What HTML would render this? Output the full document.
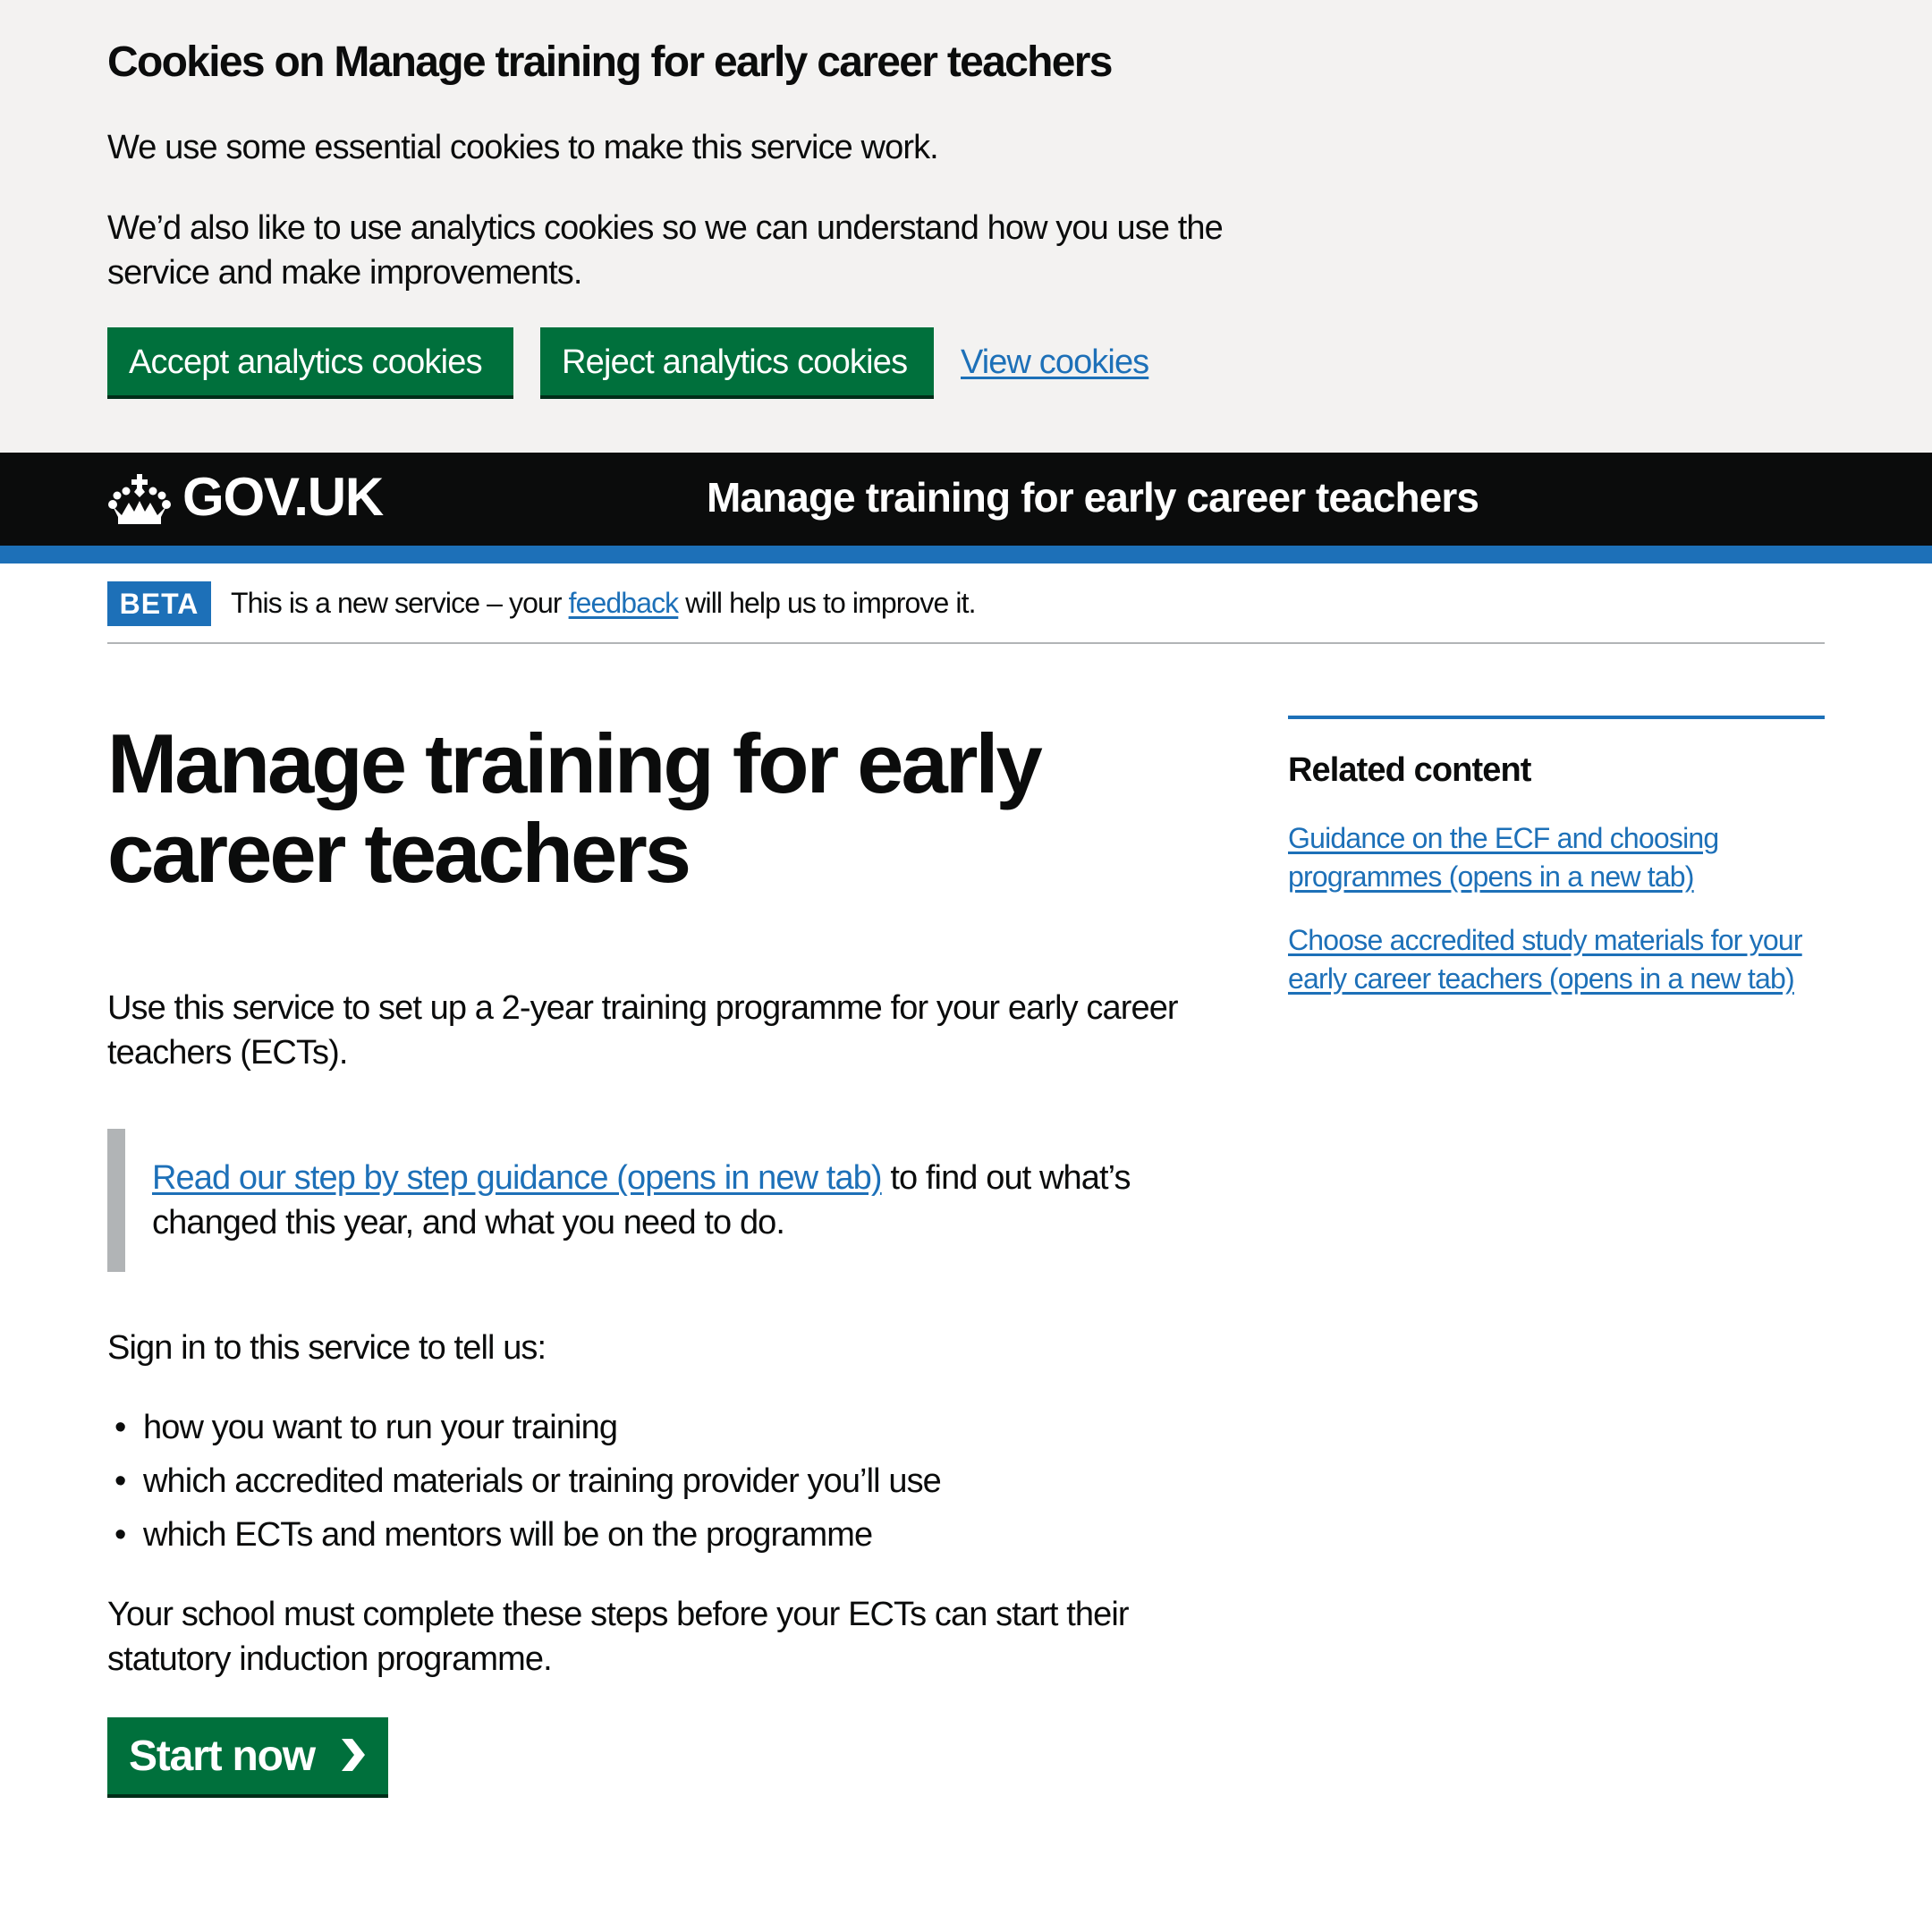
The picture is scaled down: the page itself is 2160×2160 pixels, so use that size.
<!DOCTYPE html>
<html><head><meta charset="utf-8"><style>
*{margin:0;padding:0;box-sizing:border-box}
html,body{width:2160px;height:2160px;overflow:hidden;background:#fff}
#z{zoom:2;width:1080px;height:1080px;position:relative;font-family:"Liberation Sans",Arial,sans-serif;color:#0b0c0c}
.a{position:absolute;white-space:nowrap}
.b{font-size:19px;line-height:25px;letter-spacing:-0.45px}
a{color:#1d70b8;text-decoration:underline;text-underline-offset:2px}
.btn{position:absolute;background:#00703c;color:#fff;box-shadow:0 2px 0 #002d18;font-size:19px;letter-spacing:-0.4px;line-height:19px;padding:10px 12px 8px}
</style></head><body><div id="z">
<div class="a" style="left:0;top:0;width:1080px;height:253px;background:#f3f2f1"></div>
<div class="a" style="left:60px;top:20px;font-size:24px;line-height:30px;font-weight:bold;letter-spacing:-0.85px">Cookies on Manage training for early career teachers</div>
<div class="a b" style="left:60px;top:70px">We use some essential cookies to make this service work.</div>
<div class="a b" style="left:60px;top:115px">We’d also like to use analytics cookies so we can understand how you use the<br>service and make improvements.</div>
<div class="btn" style="left:60px;top:183px;width:227px;height:38px">Accept analytics cookies</div>
<div class="btn" style="left:302px;top:183px;width:220px;height:38px">Reject analytics cookies</div>
<a class="a b" style="left:537px;top:190px">View cookies</a>

<div class="a" style="left:0;top:253px;width:1080px;height:52px;background:#0b0c0c"></div>
<div class="a" style="left:0;top:305px;width:1080px;height:10px;background:#1d70b8"></div>
<svg class="a" style="left:60px;top:264px" width="36" height="30" viewBox="0 0 72 60" fill="#fff">
<circle cx="6" cy="36" r="5"/><circle cx="11" cy="26" r="4.5"/><circle cx="21" cy="21" r="4.5"/><circle cx="51" cy="21" r="4.5"/><circle cx="61" cy="26" r="4.5"/><circle cx="66" cy="36" r="5"/>
<path d="M33 2h6v6h6v6h-6v4l3 4-6 6-6-6 3-4v-4h-6V8h6z"/>
<path d="M6 38l10 10 8-14 6 10 6-12 6 12 6-10 8 14 10-10-6 12H12z"/>
<rect x="12" y="50" width="48" height="8"/>
</svg>
<div class="a" style="left:102px;top:260px;color:#fff;font-size:30px;line-height:36px;font-weight:bold;letter-spacing:-0.6px">GOV.UK</div>
<div class="a" style="left:395px;top:263px;color:#fff;font-size:23px;line-height:30px;font-weight:bold;letter-spacing:-0.45px">Manage training for early career teachers</div>

<div class="a" style="left:60px;top:325px;width:58px;height:25px;background:#1d70b8;color:#fff;font-weight:bold;font-size:16px;line-height:25px;text-align:center;letter-spacing:0.5px">BETA</div>
<div class="a" style="left:129px;top:327px;font-size:16px;line-height:20px;letter-spacing:-0.45px">This is a new service – your <a>feedback</a> will help us to improve it.</div>
<div class="a" style="left:60px;top:359px;width:960px;height:1px;background:#b1b4b6"></div>

<div class="a" style="left:60px;top:402px;font-size:47px;line-height:50px;font-weight:bold;letter-spacing:-1.5px">Manage training for early<br>career teachers</div>
<div class="a b" style="left:60px;top:551px">Use this service to set up a 2-year training programme for your early career<br>teachers (ECTs).</div>
<div class="a" style="left:60px;top:631px;width:10px;height:80px;background:#b1b4b6"></div>
<div class="a b" style="left:85px;top:646px"><a>Read our step by step guidance (opens in new tab)</a> to find out what’s<br>changed this year, and what you need to do.</div>
<div class="a b" style="left:60px;top:741px">Sign in to this service to tell us:</div>
<div class="a b" style="left:60px;top:783px;line-height:30px">
<div><span style="display:inline-block;width:20px;padding-left:4px">•</span>how you want to run your training</div>
<div><span style="display:inline-block;width:20px;padding-left:4px">•</span>which accredited materials or training provider you’ll use</div>
<div><span style="display:inline-block;width:20px;padding-left:4px">•</span>which ECTs and mentors will be on the programme</div>
</div>
<div class="a b" style="left:60px;top:890px">Your school must complete these steps before your ECTs can start their<br>statutory induction programme.</div>
<div class="a" style="left:60px;top:960px;width:157px;height:43px;background:#00703c;box-shadow:0 2px 0 #002d18"></div>
<div class="a" style="left:72px;top:968px;color:#fff;font-size:24px;line-height:28px;font-weight:bold;letter-spacing:-0.6px">Start now</div>
<svg class="a" style="left:189px;top:971px" width="16" height="20" viewBox="0 0 16 20"><path d="M2 1h6l7 9-7 9H2l7-9z" fill="#fff"/></svg>

<div class="a" style="left:720px;top:400px;width:300px;height:2px;background:#1d70b8"></div>
<div class="a" style="left:720px;top:418px;font-size:19px;line-height:25px;font-weight:bold;letter-spacing:-0.45px">Related content</div>
<div class="a" style="left:720px;top:458px;font-size:16px;line-height:21.5px;letter-spacing:-0.4px"><a>Guidance on the ECF and choosing<br>programmes (opens in a new tab)</a></div>
<div class="a" style="left:720px;top:515px;font-size:16px;line-height:21.5px;letter-spacing:-0.4px"><a>Choose accredited study materials for your<br>early career teachers (opens in a new tab)</a></div>
</div></body></html>
